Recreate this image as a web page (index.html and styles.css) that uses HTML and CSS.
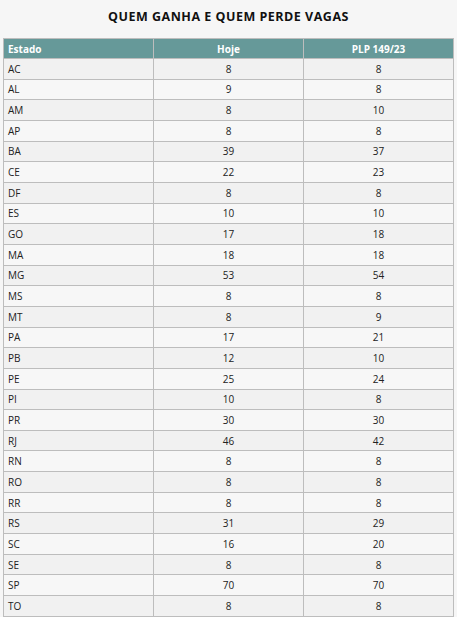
FILE: index.html
```html
<!DOCTYPE html>
<html lang="pt">
<head>
<meta charset="utf-8">
<link rel="stylesheet" href="styles.css">
</head>
<body>
<div class="page">
  <h1 class="title">QUEM GANHA E QUEM PERDE VAGAS</h1>
  <table class="data">
    <thead>
      <tr><th class="c-left">Estado</th><th>Hoje</th><th>PLP 149/23</th></tr>
    </thead>
    <tbody>
      <tr><td class="c-left">AC</td><td>8</td><td>8</td></tr>
      <tr><td class="c-left">AL</td><td>9</td><td>8</td></tr>
      <tr><td class="c-left">AM</td><td>8</td><td>10</td></tr>
      <tr><td class="c-left">AP</td><td>8</td><td>8</td></tr>
      <tr><td class="c-left">BA</td><td>39</td><td>37</td></tr>
      <tr><td class="c-left">CE</td><td>22</td><td>23</td></tr>
      <tr><td class="c-left">DF</td><td>8</td><td>8</td></tr>
      <tr><td class="c-left">ES</td><td>10</td><td>10</td></tr>
      <tr><td class="c-left">GO</td><td>17</td><td>18</td></tr>
      <tr><td class="c-left">MA</td><td>18</td><td>18</td></tr>
      <tr><td class="c-left">MG</td><td>53</td><td>54</td></tr>
      <tr><td class="c-left">MS</td><td>8</td><td>8</td></tr>
      <tr><td class="c-left">MT</td><td>8</td><td>9</td></tr>
      <tr><td class="c-left">PA</td><td>17</td><td>21</td></tr>
      <tr><td class="c-left">PB</td><td>12</td><td>10</td></tr>
      <tr><td class="c-left">PE</td><td>25</td><td>24</td></tr>
      <tr><td class="c-left">PI</td><td>10</td><td>8</td></tr>
      <tr><td class="c-left">PR</td><td>30</td><td>30</td></tr>
      <tr><td class="c-left">RJ</td><td>46</td><td>42</td></tr>
      <tr><td class="c-left">RN</td><td>8</td><td>8</td></tr>
      <tr><td class="c-left">RO</td><td>8</td><td>8</td></tr>
      <tr><td class="c-left">RR</td><td>8</td><td>8</td></tr>
      <tr><td class="c-left">RS</td><td>31</td><td>29</td></tr>
      <tr><td class="c-left">SC</td><td>16</td><td>20</td></tr>
      <tr><td class="c-left">SE</td><td>8</td><td>8</td></tr>
      <tr><td class="c-left">SP</td><td>70</td><td>70</td></tr>
      <tr><td class="c-left">TO</td><td>8</td><td>8</td></tr>
    </tbody>
  </table>
</div>
</body>
</html>
```
FILE: styles.css
```css
html, body {
  margin: 0;
  padding: 0;
  background: #f6f6f6;
}
.page {
  padding: 0 3px;
  font-family: "Open Sans", "DejaVu Sans", sans-serif;
  color: #222;
}
.title {
  margin: 0;
  padding-top: 8px;
  height: 30px;
  box-sizing: border-box;
  font-size: 12.5px;
  line-height: 18px;
  font-weight: 700;
  letter-spacing: 0.5px;
  text-align: center;
  color: #111;
}
.data {
  width: 451px;
  border-collapse: collapse;
  table-layout: fixed;
  margin-top: 8px;
  font-size: 10px;
}
.data th, .data td {
  border: 1px solid #bdbdbd;
  text-align: center;
  padding: 0 4px;
  line-height: 14px;
}
.data th {
  background: #669999;
  color: #fff;
  font-weight: 700;
  height: 19px;
}
.data td {
  height: 19.67px;
  background: #f1f1f1;
  color: #222;
}
.data tbody tr:nth-child(even) td {
  background: #f7f7f7;
}
.data .c-left {
  text-align: left;
}
```
